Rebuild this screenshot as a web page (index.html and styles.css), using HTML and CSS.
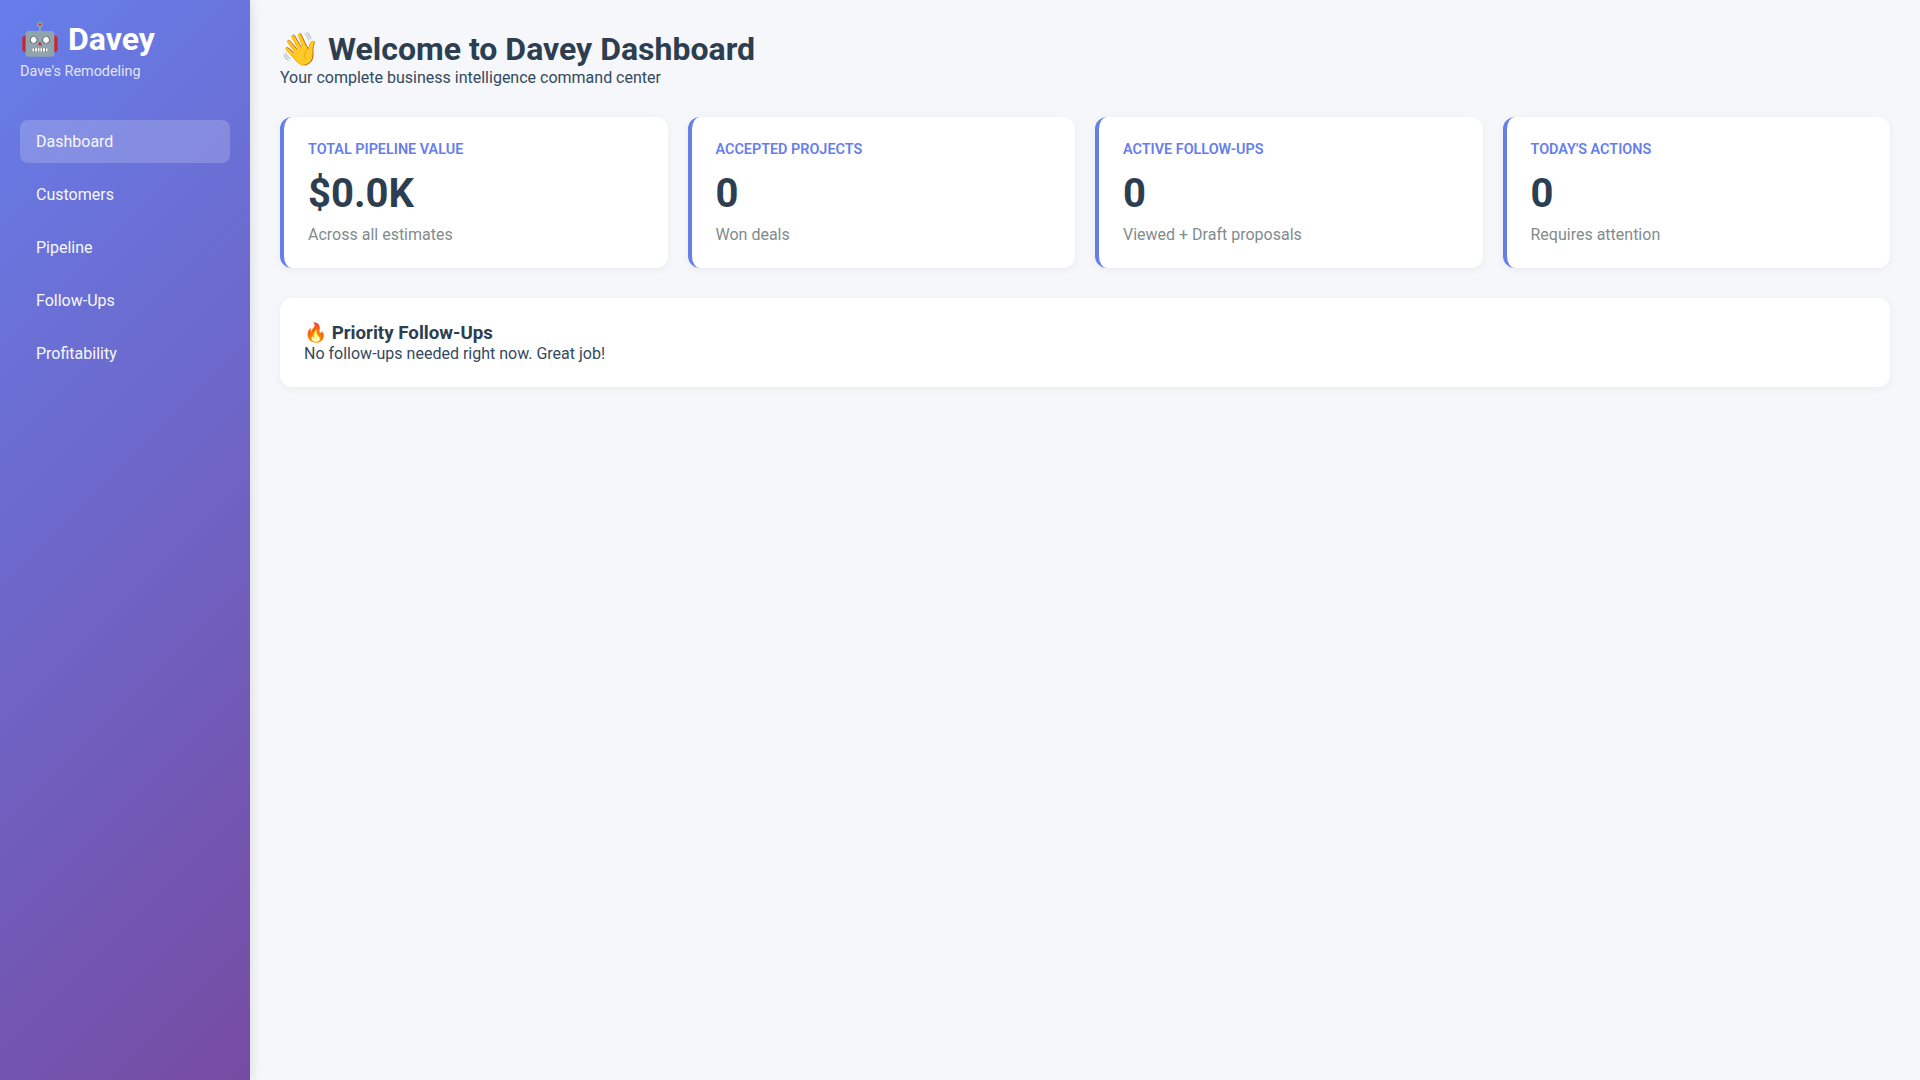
FILE: index.html
```html
<!DOCTYPE html>
<html lang="en">
<head>
<meta charset="utf-8">
<title>Davey Dashboard</title>
<link rel="stylesheet" href="styles.css">
</head>
<body>
<div class="app">
  <aside class="sidebar">
    <div class="brand">
      <h1 class="brand-title">🤖 Davey</h1>
      <p class="brand-sub">Dave's Remodeling</p>
    </div>
    <nav class="nav">
      <a class="nav-item active">Dashboard</a>
      <a class="nav-item">Customers</a>
      <a class="nav-item">Pipeline</a>
      <a class="nav-item">Follow-Ups</a>
      <a class="nav-item">Profitability</a>
    </nav>
  </aside>
  <main class="main">
    <header class="header">
      <h2 class="page-title">👋 Welcome to Davey Dashboard</h2>
      <p class="page-sub">Your complete business intelligence command center</p>
    </header>
    <section class="cards">
      <div class="card">
        <div class="card-label">TOTAL PIPELINE VALUE</div>
        <div class="card-value">$0.0K</div>
        <div class="card-note">Across all estimates</div>
      </div>
      <div class="card">
        <div class="card-label">ACCEPTED PROJECTS</div>
        <div class="card-value">0</div>
        <div class="card-note">Won deals</div>
      </div>
      <div class="card">
        <div class="card-label">ACTIVE FOLLOW-UPS</div>
        <div class="card-value">0</div>
        <div class="card-note">Viewed + Draft proposals</div>
      </div>
      <div class="card">
        <div class="card-label">TODAY'S ACTIONS</div>
        <div class="card-value">0</div>
        <div class="card-note">Requires attention</div>
      </div>
    </section>
    <section class="panel">
      <h3 class="panel-title">🔥 Priority Follow-Ups</h3>
      <p class="panel-text">No follow-ups needed right now. Great job!</p>
    </section>
  </main>
</div>
</body>
</html>
```
FILE: styles.css
```css
* { box-sizing: border-box; margin: 0; padding: 0; }
html, body { height: 100%; }
body {
  font-family: Roboto, "Noto Sans", sans-serif;
  background: #f5f7fa;
  color: #2c3e50;
}
.app { display: flex; min-height: 100vh; }
.sidebar {
  width: 250px;
  flex: none;
  padding: 20px;
  background: linear-gradient(135deg, #667eea 0%, #764ba2 100%);
  color: #fff;
  box-shadow: 2px 0 10px rgba(0, 0, 0, 0.1);
}
.brand { margin-bottom: 40px; }
.brand-title { font-size: 32px; font-weight: 700; line-height: 38px; }
.brand-sub { font-size: 14.4px; line-height: 17px; opacity: 0.8; margin-top: 5px; }
.nav { display: flex; flex-direction: column; gap: 10px; }
.nav-item {
  display: block;
  padding: 12px 16px;
  border-radius: 8px;
  font-size: 16px;
  line-height: 19px;
  color: #fff;
  opacity: 0.95;
}
.nav-item.active { background: rgba(255, 255, 255, 0.2); }
.main { flex: 1; padding: 30px; min-width: 0; }
.header { margin-bottom: 30px; }
.page-title { font-size: 32px; font-weight: 700; line-height: 38px; color: #2c3e50; }
.page-sub { font-size: 16px; line-height: 19px; color: #34495e; }
.cards { display: grid; grid-template-columns: repeat(4, 1fr); gap: 20px; margin-bottom: 30px; }
.card {
  background: #fff;
  border-left: 4px solid #667eea;
  border-radius: 12px;
  padding: 24px;
  box-shadow: 0 2px 10px rgba(0, 0, 0, 0.05);
}
.card-label { font-size: 14.4px; font-weight: 600; line-height: 17px; color: #667eea; margin-bottom: 12px; }
.card-value { font-size: 40px; font-weight: 700; line-height: 47px; color: #2c3e50; margin-bottom: 8px; }
.card-note { font-size: 16px; line-height: 19px; color: #7f8c8d; }
.panel {
  background: #fff;
  border-radius: 12px;
  padding: 24px;
  box-shadow: 0 2px 10px rgba(0, 0, 0, 0.05);
}
.panel-title { font-size: 18.72px; font-weight: 700; line-height: 22px; color: #2c3e50; }
.panel-text { font-size: 16px; line-height: 19px; color: #34495e; }
```
